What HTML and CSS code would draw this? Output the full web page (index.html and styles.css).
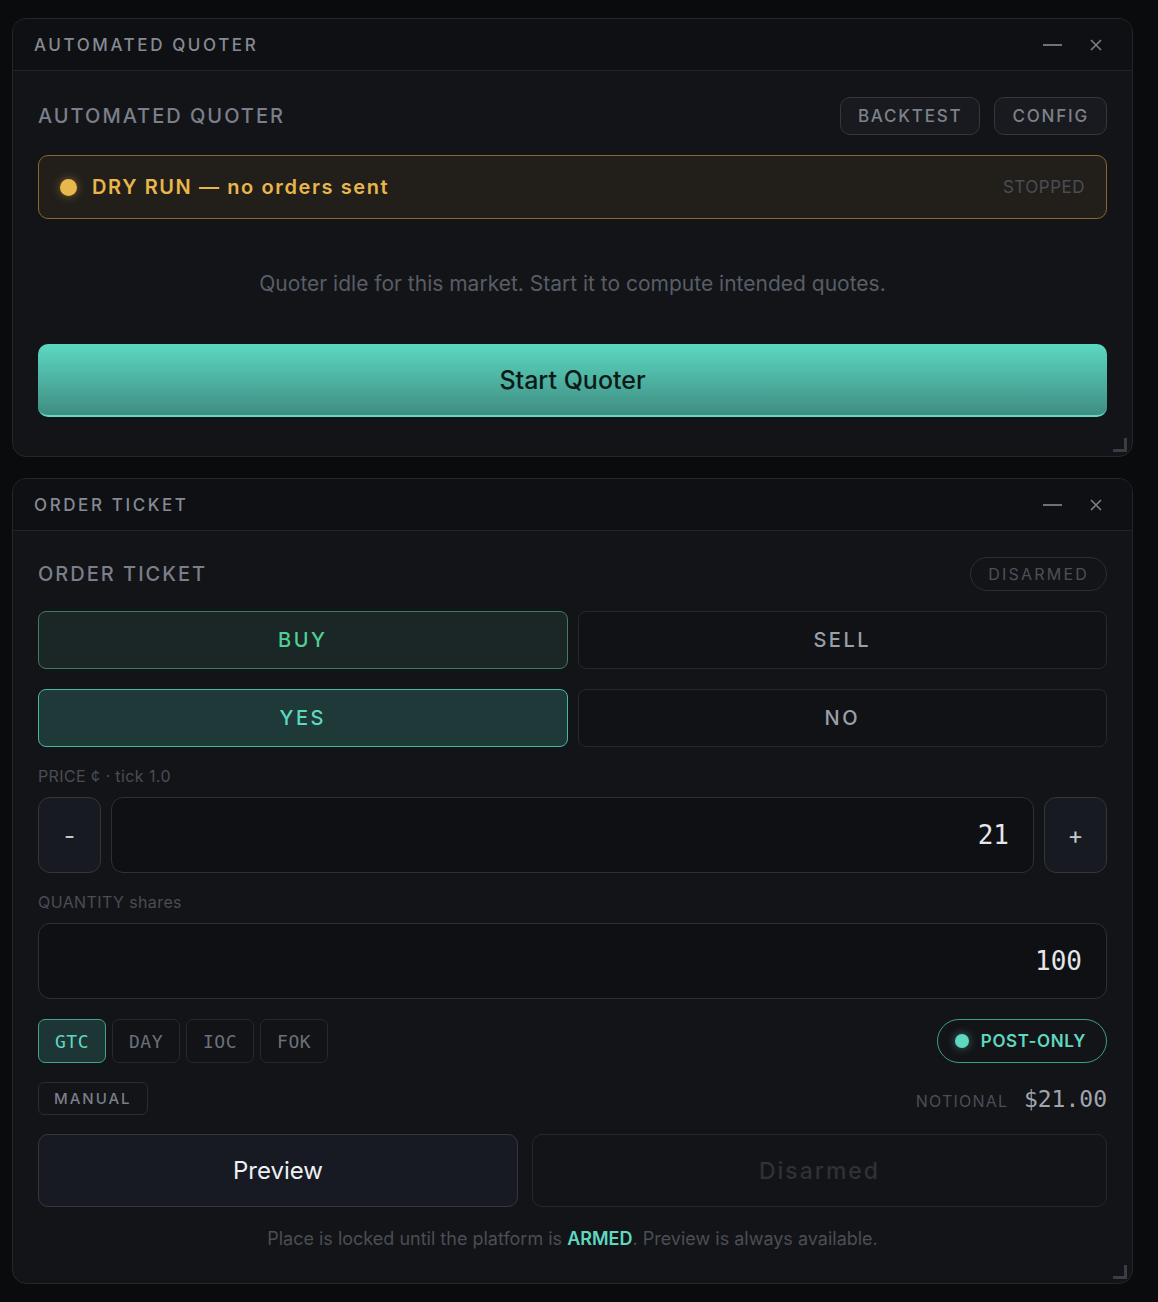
FILE: index.html
```html
<!DOCTYPE html>
<html lang="en">

<head>
    <meta charset="UTF-8">
    <title>Automated Quoter</title>
    <link rel="stylesheet" href="styles.css">
</head>

<body>
    <section class="panel quoter">
        <header class="titlebar">
            <span class="titlebar-navn">AUTOMATED QUOTER</span>
            <div class="win-ctrl">
                <span class="win-min"></span>
                <svg class="win-close" width="12" height="12" viewBox="0 0 12 12"><path d="M1 1 L11 11 M11 1 L1 11" stroke="currentColor" stroke-width="1.6" /></svg>
            </div>
        </header>
        <div class="panel-body">
            <div class="panel-head">
                <h2>AUTOMATED QUOTER</h2>
                <div class="head-knapper">
                    <button class="ghost">BACKTEST</button>
                    <button class="ghost">CONFIG</button>
                </div>
            </div>

            <div class="dryrun">
                <span class="dryrun-dot"></span>
                <span class="dryrun-tekst">DRY RUN — no orders sent</span>
                <span class="dryrun-status">STOPPED</span>
            </div>

            <p class="idle">Quoter idle for this market. Start it to compute intended quotes.</p>

            <button class="start">Start Quoter</button>
        </div>
        <span class="grip"></span>
    </section>

    <section class="panel ticket">
        <header class="titlebar">
            <span class="titlebar-navn">ORDER TICKET</span>
            <div class="win-ctrl">
                <span class="win-min"></span>
                <svg class="win-close" width="12" height="12" viewBox="0 0 12 12"><path d="M1 1 L11 11 M11 1 L1 11" stroke="currentColor" stroke-width="1.6" /></svg>
            </div>
        </header>
        <div class="panel-body">
            <div class="panel-head">
                <h2>ORDER TICKET</h2>
                <span class="pill-disarmed">DISARMED</span>
            </div>

            <div class="toggle-row">
                <button class="toggle buy aktiv">BUY</button>
                <button class="toggle">SELL</button>
            </div>
            <div class="toggle-row">
                <button class="toggle yes aktiv">YES</button>
                <button class="toggle">NO</button>
            </div>

            <label class="felt-label">PRICE ¢ · tick 1.0</label>
            <div class="price-row">
                <button class="step">-</button>
                <div class="felt mono">21</div>
                <button class="step">+</button>
            </div>

            <label class="felt-label">QUANTITY shares</label>
            <div class="felt mono qty">100</div>

            <div class="tif-row">
                <div class="tif">
                    <button class="tif-knap aktiv">GTC</button>
                    <button class="tif-knap">DAY</button>
                    <button class="tif-knap">IOC</button>
                    <button class="tif-knap">FOK</button>
                </div>
                <span class="postonly"><span class="postonly-dot"></span>POST-ONLY</span>
            </div>

            <div class="meta-row">
                <span class="manual">MANUAL</span>
                <span class="notional">NOTIONAL <b class="mono">$21.00</b></span>
            </div>

            <div class="action-row">
                <button class="preview">Preview</button>
                <button class="disarmed">Disarmed</button>
            </div>

            <p class="hint">Place is locked until the platform is <b>ARMED</b>. Preview is always available.</p>
        </div>
        <span class="grip"></span>
    </section>
</body>

</html>
```

FILE: styles.css
```css
body {
    background-color: #0a0b0d;
    margin: 0;
    padding: 18px 25px 0 12px;
    font-family: Inter, "Noto Sans", sans-serif;
    color: #c8ccd2;
}

button {
    font-family: inherit;
    cursor: pointer;
}

.mono {
    font-family: "DejaVu Sans Mono", "Liberation Mono", monospace;
}

.panel {
    position: relative;
    box-sizing: border-box;
    background-color: #131418;
    border: 1px solid #25272c;
    border-radius: 14px;
    overflow: hidden;
}

.quoter {
    height: 439px;
}

.ticket {
    margin-top: 21px;
    height: 806px;
}

.titlebar {
    height: 52px;
    box-sizing: border-box;
    background-color: #0f1013;
    border-bottom: 1px solid #22242a;
    display: flex;
    align-items: center;
    justify-content: space-between;
    padding: 0 30px 0 21px;
}

.titlebar-navn {
    font-size: 17px;
    letter-spacing: 2.6px;
    color: #858a93;
    font-weight: 500;
}

.win-ctrl {
    display: flex;
    align-items: center;
    gap: 28px;
    color: #7a7f88;
}

.win-min {
    width: 19px;
    height: 2px;
    background-color: #6c717a;
}

.panel-body {
    padding: 26px 25px 0 25px;
}

.panel-head {
    display: flex;
    align-items: center;
    justify-content: space-between;
}

.panel-head h2 {
    margin: 0;
    font-size: 20px;
    font-weight: 500;
    letter-spacing: 2px;
    color: #7a7f89;
}

.head-knapper {
    display: flex;
    gap: 14px;
}

.ghost {
    height: 38px;
    padding: 0 17px;
    background-color: #181a1f;
    border: 1px solid #35373d;
    border-radius: 10px;
    color: #7d828b;
    font-size: 17px;
    font-weight: 500;
    letter-spacing: 1.8px;
}

.dryrun {
    margin-top: 20px;
    height: 64px;
    box-sizing: border-box;
    border: 1.5px solid #86692c;
    background-color: #221f1b;
    border-radius: 10px;
    display: flex;
    align-items: center;
    padding: 0 21px 0 21px;
}

.dryrun-dot {
    width: 17px;
    height: 17px;
    border-radius: 50%;
    background-color: #e9b84c;
    box-shadow: 0 0 8px rgba(233, 184, 76, .45);
    margin-right: 15px;
}

.dryrun-tekst {
    font-size: 20px;
    font-weight: 600;
    letter-spacing: 1.6px;
    color: #e8b64b;
}

.dryrun-status {
    margin-left: auto;
    font-size: 17px;
    letter-spacing: .5px;
    color: #4a4d54;
}

.idle {
    margin: 52px 0 0 0;
    text-align: center;
    font-size: 21px;
    line-height: 25px;
    color: #585d66;
}

.start {
    display: block;
    width: 100%;
    margin-top: 48px;
    height: 73px;
    border: 0;
    border-bottom: 2px solid #5fdcc3;
    border-radius: 10px;
    background: linear-gradient(#5cd8c2, #3f8d82);
    color: #0d1a18;
    font-size: 25px;
    font-weight: 500;
}

.grip {
    position: absolute;
    right: 5px;
    bottom: 4px;
    width: 14px;
    height: 14px;
    border-right: 3px solid #3a3d43;
    border-bottom: 3px solid #3a3d43;
    box-sizing: border-box;
}

.pill-disarmed {
    height: 34px;
    box-sizing: border-box;
    padding: 0 17px;
    border: 1px solid #2c2e34;
    border-radius: 17px;
    display: flex;
    align-items: center;
    font-size: 16px;
    letter-spacing: 2.2px;
    color: #4c5058;
}

.toggle-row {
    display: grid;
    grid-template-columns: 1fr 1fr;
    gap: 10px;
    margin-top: 20px;
}

.toggle {
    height: 58px;
    border-radius: 8px;
    border: 1px solid #26282d;
    background-color: #111216;
    color: #9aa0a8;
    font-size: 20px;
    font-weight: 500;
    letter-spacing: 2.5px;
}

.toggle.buy {
    background-color: #1b2626;
    border: 1.5px solid #3b7d5f;
    color: #50cf95;
}

.toggle.yes {
    background-color: #1f3838;
    border: 1.5px solid #45b8a2;
    color: #5fd8c0;
}

.felt-label {
    display: block;
    margin-top: 20px;
    font-size: 16px;
    line-height: 18px;
    color: #494d55;
    letter-spacing: .4px;
}

.price-row {
    display: flex;
    gap: 10px;
    margin-top: 12px;
}

.step {
    width: 63px;
    height: 76px;
    background-color: #171a21;
    border: 1px solid #33353b;
    border-radius: 12px;
    color: #c3c8cf;
    font-size: 24px;
}

.felt {
    flex: 1;
    height: 76px;
    box-sizing: border-box;
    background-color: #0f1013;
    border: 1px solid #2e3036;
    border-radius: 12px;
    display: flex;
    align-items: center;
    justify-content: flex-end;
    padding-right: 24px;
    font-size: 26px;
    color: #e4e7ea;
}

.felt.qty {
    margin-top: 12px;
}

.tif-row {
    display: flex;
    justify-content: space-between;
    align-items: center;
    margin-top: 20px;
}

.tif {
    display: flex;
    gap: 6px;
}

.tif-knap {
    height: 44px;
    padding: 0 16px;
    background-color: #121317;
    border: 1px solid #26282d;
    border-radius: 7px;
    font-family: "DejaVu Sans Mono", "Liberation Mono", monospace;
    font-size: 18px;
    letter-spacing: .5px;
    color: #6b7079;
}

.tif-knap.aktiv {
    background-color: #1e3535;
    border: 1.5px solid #3fa38f;
    color: #5fd8c0;
}

.postonly {
    height: 44px;
    box-sizing: border-box;
    padding: 0 20px 0 17px;
    border: 1.5px solid #3b9d8b;
    border-radius: 22px;
    display: flex;
    align-items: center;
    gap: 12px;
    font-size: 17px;
    font-weight: 600;
    letter-spacing: .6px;
    color: #5fd8c0;
}

.postonly-dot {
    width: 14px;
    height: 14px;
    border-radius: 50%;
    background-color: #5fd8c0;
    box-shadow: 0 0 8px rgba(95, 216, 192, .5);
}

.meta-row {
    display: flex;
    justify-content: space-between;
    align-items: center;
    margin-top: 19px;
}

.manual {
    height: 33px;
    box-sizing: border-box;
    padding: 0 15px;
    border: 1px solid #2a2c32;
    border-radius: 6px;
    display: flex;
    align-items: center;
    font-size: 15px;
    font-weight: 500;
    letter-spacing: 2px;
    color: #7a7f88;
}

.notional {
    font-size: 16px;
    letter-spacing: 1.2px;
    color: #4a4e56;
}

.notional b {
    font-weight: 400;
    font-size: 23px;
    letter-spacing: 0;
    color: #a0a5ad;
    margin-left: 10px;
}

.action-row {
    display: flex;
    gap: 14px;
    margin-top: 19px;
}

.preview,
.disarmed {
    height: 73px;
    border-radius: 10px;
    font-size: 24px;
}

.preview {
    width: 480px;
    background-color: #171a23;
    border: 1px solid #35373d;
    color: #eef0f2;
}

.disarmed {
    flex: 1;
    background-color: #131418;
    border: 1px solid #26282d;
    color: #2e3137;
    letter-spacing: 2px;
    font-weight: 500;
    font-size: 23px;
}

.hint {
    margin: 21px 0 0 0;
    text-align: center;
    font-size: 18px;
    line-height: 22px;
    color: #4a4e56;
}

.hint b {
    color: #5fd8c0;
    font-weight: 600;
}
```
